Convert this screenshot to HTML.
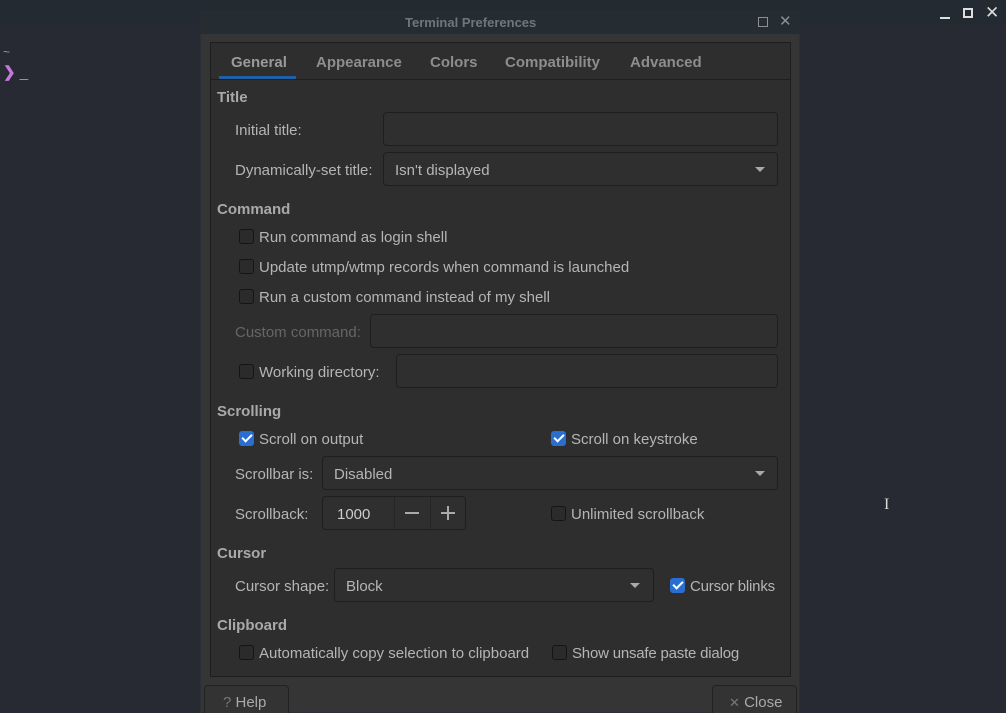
<!DOCTYPE html>
<html style="overflow:hidden;width:1006px;height:713px"><head><style>
*{margin:0;padding:0;box-sizing:border-box}
body{width:1006px;height:713px;background:#272a33;font-family:"Liberation Sans",sans-serif;font-size:15px;color:#b5b5b5;position:relative;overflow:hidden}
.a{position:absolute;white-space:nowrap}
.t{margin-top:1px}
.h{font-weight:bold;color:#a9a9a9;font-size:15px}
.box{position:absolute;border:1px solid #1e1e1e;border-radius:4px;background:#2f2f2f}
.cb{position:absolute;width:15px;height:15px;border:1px solid #151515;border-radius:3px;background:#2b2b2b}
.cb.on{background:#2a6fd0;border-color:#2a6fd0}
.cb.on::after{content:"";position:absolute;left:4px;top:0px;width:4px;height:8px;border:solid #fff;border-width:0 2.5px 2.5px 0;transform:rotate(45deg)}
.arr{position:absolute;width:0;height:0;border-left:5px solid transparent;border-right:5px solid transparent;border-top:5px solid #aaa}
.tab{position:absolute;top:54px;font-weight:bold;color:#8d8d8d}
#w .a:not(.box):not(.cb){}
</style></head><body>
<div class="a" style="left:0;top:0;width:1006px;height:25px;background:#232a31"></div>
<div class="a" style="left:940px;top:17px;width:10px;height:2px;background:#ddd"></div>
<div class="a" style="left:963px;top:8px;width:10px;height:10px;border:2px solid #ddd"></div>
<div class="a" style="left:985px;top:3px;color:#ddd;font-size:17px">✕</div>
<div class="a" style="left:3px;top:45px;color:#999;font-size:12px">~</div>
<div class="a" style="left:3px;top:63px;color:#c678dd;font-size:15px;font-weight:bold">❯ <span style="font-weight:normal">_</span></div>

<div class="a" style="left:200px;top:10px;width:600px;height:703px;background:#353535;border:1px solid #2a3036"></div>
<div class="a" style="left:200px;top:10px;width:600px;height:24px;background:#252d33"></div>
<div class="a" style="left:405px;top:15px;font-size:13px;font-weight:bold;color:#6f777d">Terminal Preferences</div>
<div class="a" style="left:758px;top:17px;width:10px;height:10px;border:1.5px solid #8a9096"></div>
<div class="a" style="left:779px;top:12px;color:#8a9096;font-size:15px">✕</div>

<div class="a" style="left:210px;top:42px;width:581px;height:635px;background:#2e2e2e;border:1px solid #1e1e1e"></div>
<div class="a" style="left:211px;top:79px;width:579px;height:1px;background:#1e1e1e"></div>
<div class="tab" style="left:231px;color:#9a9a9a">General</div>
<div class="a" style="left:219px;top:76px;width:77px;height:3px;background:#1f5fa8"></div>
<div class="tab" style="left:316px">Appearance</div>
<div class="tab" style="left:430px">Colors</div>
<div class="tab" style="left:505px">Compatibility</div>
<div class="tab" style="left:630px">Advanced</div>

<div class="a h" style="left:217px;top:89px">Title</div>
<div class="a" style="left:235px;top:122px">Initial title:</div>
<div class="box" style="left:383px;top:112px;width:395px;height:34px"></div>
<div class="a" style="left:235px;top:162px">Dynamically-set title:</div>
<div class="box" style="left:383px;top:152px;width:395px;height:34px"></div>
<div class="a" style="left:395px;top:162px">Isn't displayed</div>
<div class="arr" style="left:755px;top:167px"></div>

<div class="a h" style="left:217px;top:201px">Command</div>
<div class="cb" style="left:239px;top:229px"></div><div class="a" style="left:259px;top:229px">Run command as login shell</div>
<div class="cb" style="left:239px;top:259px"></div><div class="a" style="left:259px;top:259px">Update utmp/wtmp records when command is launched</div>
<div class="cb" style="left:239px;top:289px"></div><div class="a" style="left:259px;top:289px">Run a custom command instead of my shell</div>
<div class="a" style="left:235px;top:324px;color:#666">Custom command:</div>
<div class="box" style="left:370px;top:314px;width:408px;height:34px"></div>
<div class="cb" style="left:239px;top:364px"></div><div class="a" style="left:259px;top:364px">Working directory:</div>
<div class="box" style="left:396px;top:354px;width:382px;height:34px"></div>

<div class="a h" style="left:217px;top:403px">Scrolling</div>
<div class="cb on" style="left:239px;top:431px"></div><div class="a" style="left:259px;top:431px">Scroll on output</div>
<div class="cb on" style="left:551px;top:431px"></div><div class="a" style="left:571px;top:431px">Scroll on keystroke</div>
<div class="a" style="left:235px;top:466px">Scrollbar is:</div>
<div class="box" style="left:322px;top:456px;width:456px;height:34px"></div>
<div class="a" style="left:334px;top:466px">Disabled</div>
<div class="arr" style="left:755px;top:471px"></div>
<div class="a" style="left:235px;top:506px">Scrollback:</div>
<div class="box" style="left:322px;top:496px;width:144px;height:34px"></div>
<div class="a" style="left:394px;top:497px;width:1px;height:32px;background:#262626"></div>
<div class="a" style="left:430px;top:497px;width:1px;height:32px;background:#262626"></div>
<div class="a" style="left:337px;top:506px;color:#ccc">1000</div>
<div class="a" style="left:405px;top:512px;width:14px;height:2px;background:#aaa"></div>
<div class="a" style="left:441px;top:512px;width:14px;height:2px;background:#aaa"></div>
<div class="a" style="left:447px;top:506px;width:2px;height:14px;background:#aaa"></div>
<div class="cb" style="left:551px;top:506px"></div><div class="a" style="left:571px;top:506px">Unlimited scrollback</div>

<div class="a h" style="left:217px;top:545px">Cursor</div>
<div class="a" style="left:235px;top:578px">Cursor shape:</div>
<div class="box" style="left:334px;top:568px;width:320px;height:34px"></div>
<div class="a" style="left:346px;top:578px">Block</div>
<div class="arr" style="left:630px;top:583px"></div>
<div class="cb on" style="left:670px;top:578px"></div><div class="a" style="left:690px;top:578px;letter-spacing:-0.2px">Cursor blinks</div>

<div class="a h" style="left:217px;top:617px">Clipboard</div>
<div class="cb" style="left:239px;top:645px"></div><div class="a" style="left:259px;top:645px">Automatically copy selection to clipboard</div>
<div class="cb" style="left:552px;top:645px"></div><div class="a" style="left:572px;top:645px;letter-spacing:-0.2px">Show unsafe paste dialog</div>

<div class="box" style="left:204px;top:685px;width:85px;height:28px;background:#333;border-color:#222;border-bottom:none;border-radius:4px 4px 0 0"></div>
<div class="a" style="left:223px;top:694px;color:#aaa"><span style="color:#777">?</span> Help</div>
<div class="box" style="left:712px;top:685px;width:85px;height:28px;background:#333;border-color:#222;border-bottom:none;border-radius:4px 4px 0 0"></div>
<div class="a" style="left:729px;top:694px;color:#aaa"><span style="color:#777;font-size:13px">✕</span> Close</div>

<div class="a" style="left:884px;top:496px;color:#ddd;font-size:16px;font-family:'Liberation Serif',serif">I</div>
</body></html>
